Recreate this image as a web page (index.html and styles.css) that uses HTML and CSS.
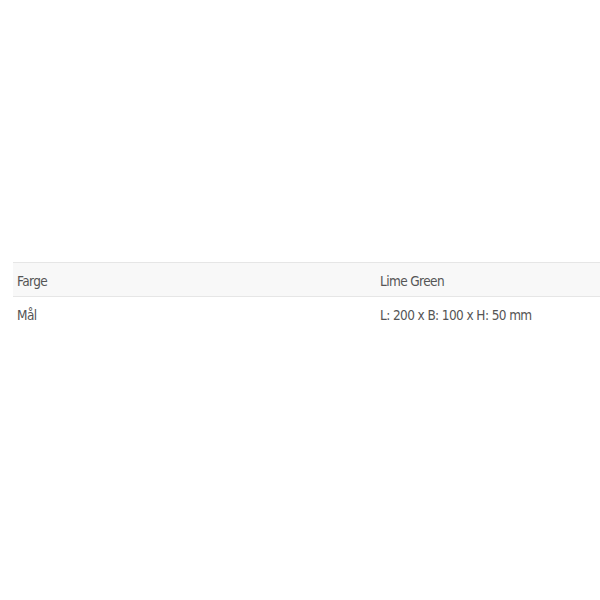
FILE: index.html
```html
<!DOCTYPE html>
<html lang="no">
<head>
  <meta charset="UTF-8">
  <title>Produktinformasjon</title>
  <link rel="stylesheet" href="styles.css">
</head>
<body>
  <div class="specs">
    <table class="spec-table">
      <tbody>
        <tr class="spec-row">
          <th class="spec-label">Farge</th>
          <td class="spec-value">Lime Green</td>
        </tr>
        <tr class="spec-row">
          <th class="spec-label">Mål</th>
          <td class="spec-value">L: 200 x B: 100 x H: 50 mm</td>
        </tr>
      </tbody>
    </table>
  </div>
</body>
</html>
```

FILE: styles.css
```css
* { margin: 0; padding: 0; box-sizing: border-box; }

body {
  background: #fff; color: #555;
  font-family: 'DejaVu Sans Condensed', 'Roboto', sans-serif;
  -webkit-font-smoothing: antialiased;
}

.specs {
  padding: 262px 0 0 13px;
}

.spec-table {
  width: 100%; border-collapse: collapse;
  border-top: 1px solid #e6e6e6;
}

.spec-row:nth-child(odd) { background: #f8f8f8; }
.spec-row { border-bottom: 1px solid #e6e6e6; }
.spec-row:last-child { border-bottom: none; }

.spec-label, .spec-value {
  text-align: left; font-weight: 400; font-size: 13.5px; letter-spacing: -0.6px;
  height: 34px; padding: 3px 4px 0; vertical-align: middle;
}

.spec-label { width: 363px; }
```
